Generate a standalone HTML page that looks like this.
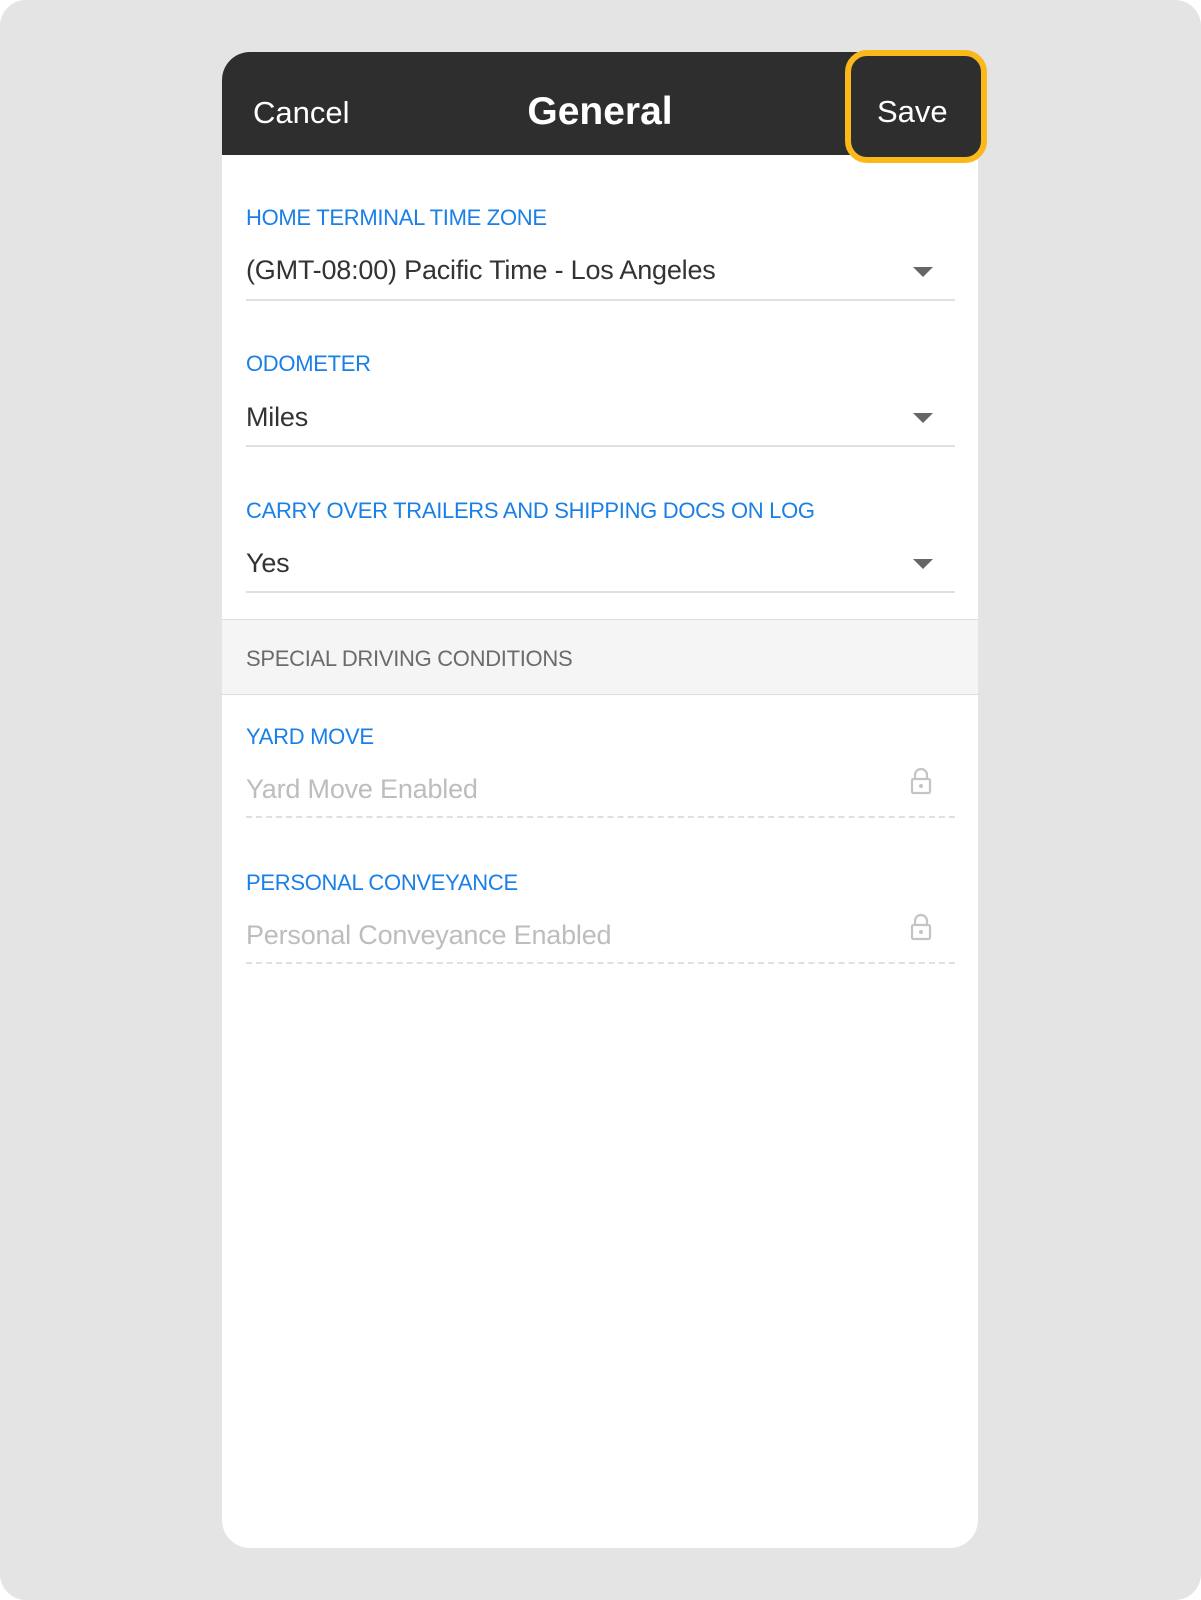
<!DOCTYPE html>
<html><head><style>
html,body{margin:0;padding:0;}
body{width:1201px;height:1600px;background:#fff;position:relative;overflow:hidden;font-family:"Liberation Sans",sans-serif;}
.bg{position:absolute;left:0;top:0;width:1201px;height:1600px;background:#e4e4e4;border-radius:26px;}
.card{position:absolute;left:222px;top:52px;width:756px;height:1496px;background:#fff;border-radius:28px;overflow:hidden;}
.hdr{position:absolute;left:0;top:0;width:756px;height:103px;background:#2e2e2e;}
.t{position:absolute;white-space:nowrap;}
.lbl{color:#1a7fe6;font-size:22px;left:24px;letter-spacing:-0.3px;}
.val{color:#333;font-size:27px;left:24px;letter-spacing:-0.2px;}
.dis{color:#bdbdbd;}
.line{position:absolute;left:24px;width:709px;height:0;border-top:2px solid #e0e0e0;}
.dash{position:absolute;left:24px;width:709px;height:0;border-top:2px dashed #e0e0e0;}
.arr{position:absolute;left:691px;width:0;height:0;border-left:10px solid transparent;border-right:10px solid transparent;border-top:10px solid #666;}
</style></head><body>
<div class="bg"></div>
<div class="card">
<div class="hdr"></div>
<div class="t" style="left:31px;top:43px;font-size:31px;color:#fff;">Cancel</div>
<div class="t" style="left:0;width:756px;text-align:center;top:38px;font-size:39px;font-weight:bold;color:#fff;">General</div>

<div class="t lbl" style="top:153px;">HOME TERMINAL TIME ZONE</div>
<div class="t val" style="top:203px;">(GMT-08:00) Pacific Time - Los Angeles</div>
<div class="arr" style="top:215px;"></div>
<div class="line" style="top:247px;"></div>

<div class="t lbl" style="top:299px;">ODOMETER</div>
<div class="t val" style="top:350px;">Miles</div>
<div class="arr" style="top:361px;"></div>
<div class="line" style="top:393px;"></div>

<div class="t lbl" style="top:446px;">CARRY OVER TRAILERS AND SHIPPING DOCS ON LOG</div>
<div class="t val" style="top:496px;">Yes</div>
<div class="arr" style="top:507px;"></div>
<div class="line" style="top:539px;"></div>

<div style="position:absolute;left:0;top:567px;width:756px;height:74px;background:#f5f5f5;border-top:1px solid #ddd;border-bottom:1px solid #ddd;"></div>
<div class="t" style="left:24px;top:594px;font-size:22px;color:#6b6b6b;letter-spacing:-0.3px;">SPECIAL DRIVING CONDITIONS</div>

<div class="t lbl" style="top:672px;">YARD MOVE</div>
<div class="t val dis" style="top:722px;">Yard Move Enabled</div>
<svg style="position:absolute;left:688px;top:715px" width="22" height="28" viewBox="0 0 22 28"><path d="M5 12V8a6 6 0 0 1 12 0v4" fill="none" stroke="#c4c4c4" stroke-width="2.2"/><rect x="2" y="12" width="18" height="14" rx="1.5" fill="none" stroke="#c4c4c4" stroke-width="2.2"/><circle cx="11" cy="19" r="2" fill="#c4c4c4"/></svg>
<div class="dash" style="top:764px;"></div>

<div class="t lbl" style="top:818px;">PERSONAL CONVEYANCE</div>
<div class="t val dis" style="top:868px;">Personal Conveyance Enabled</div>
<svg style="position:absolute;left:688px;top:861px" width="22" height="28" viewBox="0 0 22 28"><path d="M5 12V8a6 6 0 0 1 12 0v4" fill="none" stroke="#c4c4c4" stroke-width="2.2"/><rect x="2" y="12" width="18" height="14" rx="1.5" fill="none" stroke="#c4c4c4" stroke-width="2.2"/><circle cx="11" cy="19" r="2" fill="#c4c4c4"/></svg>
<div class="dash" style="top:910px;"></div>
</div>
<div style="position:absolute;left:845px;top:50px;width:130px;height:101px;border:6px solid #fbb81b;border-radius:22px;background:#2e2e2e;"></div>
<div class="t" style="left:877px;top:94px;font-size:31px;color:#fff;">Save</div>
</body></html>
